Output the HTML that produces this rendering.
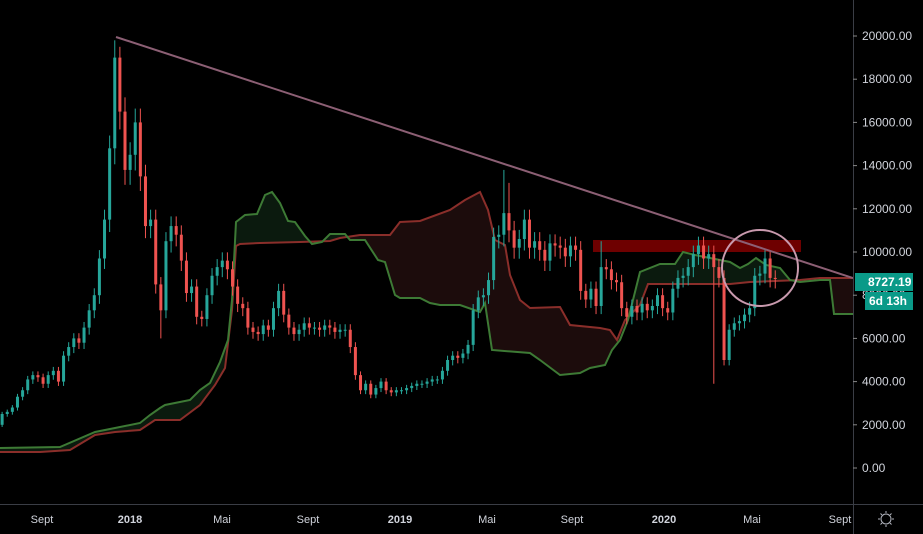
<!DOCTYPE html>
<html><head><meta charset="utf-8"><style>
html,body{margin:0;padding:0;background:#000;}
svg{display:block;font-family:"Liberation Sans",sans-serif;}
</style></head><body>
<svg id="s" width="923" height="534" viewBox="0 0 923 534" xmlns="http://www.w3.org/2000/svg">
<rect width="923" height="534" fill="#000"/>
<defs>
<clipPath id="belowA"><polygon id="pA"/></clipPath>
<clipPath id="belowB"><polygon id="pB"/></clipPath>
<clipPath id="plot"><rect x="0" y="0" width="853" height="504"/></clipPath>
</defs>
<g clip-path="url(#plot)">
<g clip-path="url(#belowA)"><polygon id="aboveB" fill="#0b1a0e"/></g>
<g clip-path="url(#belowB)"><polygon id="aboveA" fill="#1c0c0c"/></g>
<rect x="593" y="240" width="208" height="12" fill="#6e0000"/>
<polyline id="lB" fill="none" stroke="#8a2e2a" stroke-width="2"/>
<polyline id="lA" fill="none" stroke="#3d7a35" stroke-width="2"/>
<g id="candles"></g>
<line x1="116" y1="37" x2="853" y2="278" stroke="#8c5f74" stroke-width="2"/>
<circle cx="760" cy="268" r="38" fill="none" stroke="#c99aae" stroke-width="2"/>
</g>
<line x1="853.5" y1="0" x2="853.5" y2="534" stroke="#3a3d45"/>
<line x1="0" y1="504.5" x2="923" y2="504.5" stroke="#3a3d45"/>
<g id="axis" fill="#d1d4dc" font-size="12"></g>
<rect x="855" y="273" width="58" height="18" fill="#0a9a88"/>
<text x="868" y="286" fill="#fff" font-size="12" font-weight="bold">8727.19</text>
<rect x="865" y="292" width="48" height="18" fill="#0a9a88"/>
<text x="869" y="305" fill="#fff" font-size="12" font-weight="bold">6d 13h</text>
<g id="time" fill="#d1d4dc" font-size="11"></g>
<g stroke="#b2b5be" fill="none" stroke-width="1"><circle cx="886" cy="519" r="5"/>
<path d="M886 511v2M886 525v2M878 519h2M892 519h2M880.5 513.5l1.5 1.5M890 523l1.5 1.5M880.5 524.5l1.5-1.5M890 515l1.5-1.5"/></g>
</svg>
<script>
var ns="http://www.w3.org/2000/svg";
function el(t,a,p){var e=document.createElementNS(ns,t);for(var k in a)e.setAttribute(k,a[k]);(p||document.getElementById('s')).appendChild(e);return e;}
function Y(v){return 468-v*21.6;}
var A=[[0,448],[60,447],[95,432],[115,428],[140,423],[150,415],[160,408],[165,405],[190,400],[200,390],[210,383],[220,362],[228,340],[232,300],[236,222],[245,215],[257,214],[265,195],[272,192],[280,203],[288,221],[295,222],[305,236],[312,244],[322,242],[330,234],[345,234],[350,240],[365,240],[378,260],[385,262],[395,295],[400,298],[420,298],[430,303],[440,305],[460,305],[480,312],[485,303],[492,350],[530,353],[540,360],[560,375],[580,373],[590,368],[605,365],[612,350],[620,340],[628,320],[640,272],[660,264],[675,264],[683,252],[695,255],[710,258],[730,262],[740,268],[748,264],[756,258],[766,265],[780,268],[790,280],[800,282],[820,280],[830,280],[834,314],[860,314]];
var B=[[0,452],[40,452],[70,450],[95,435],[115,432],[140,430],[155,420],[180,420],[200,405],[215,385],[225,368],[232,310],[236,246],[240,244],[260,243],[300,242],[330,241],[340,238],[360,235],[390,235],[400,222],[420,221],[450,210],[465,200],[480,192],[488,210],[495,240],[505,245],[510,275],[520,300],[530,308],[560,307],[570,325],[600,328],[610,330],[617,340],[625,320],[640,305],[648,284],[700,284],[730,284],[750,282],[800,280],[820,278],[860,278]];
function ps(a){return a.map(function(p){return p.join(',')}).join(' ');}
document.getElementById('lA').setAttribute('points',ps(A));
document.getElementById('lB').setAttribute('points',ps(B));
document.getElementById('pA').setAttribute('points',ps(A)+' 860,600 0,600');
document.getElementById('pB').setAttribute('points',ps(B)+' 860,600 0,600');
document.getElementById('aboveB').setAttribute('points',ps(B)+' 860,-10 0,-10');
document.getElementById('aboveA').setAttribute('points',ps(A)+' 860,-10 0,-10');
var c=[2.0,2.5,2.6,2.8,3.3,3.6,4.1,4.3,4.2,3.9,4.3,4.5,4.0,5.2,5.6,6.0,5.8,6.5,7.3,8.0,9.7,11.5,14.8,19.0,16.5,13.8,14.5,16.0,13.5,11.2,11.5,8.5,7.3,10.5,11.2,10.8,9.6,8.1,8.4,7.0,6.9,8.0,8.9,9.3,9.6,9.2,8.4,7.6,7.4,6.5,6.3,6.2,6.6,6.4,7.4,8.2,7.1,6.5,6.2,6.4,6.7,6.5,6.5,6.4,6.6,6.5,6.3,6.4,6.4,5.6,4.3,3.6,3.9,3.4,3.7,4.0,3.6,3.5,3.6,3.6,3.7,3.8,3.9,3.9,4.0,4.1,4.1,4.5,5.0,5.2,5.1,5.3,5.7,7.3,7.9,8.0,8.7,10.7,10.8,11.8,11.0,10.2,10.6,11.5,10.2,10.5,10.1,9.6,10.4,10.3,10.2,9.8,10.3,10.1,8.2,7.8,8.3,7.5,9.3,9.2,8.7,8.6,7.4,7.0,7.5,7.2,7.6,7.3,7.5,8.0,7.4,7.2,8.3,8.8,8.9,9.3,9.9,10.3,9.7,9.9,9.3,8.8,5.0,6.4,6.7,6.8,7.1,7.4,8.9,9.0,9.7,8.8,8.75];
var g=document.getElementById('candles');
var hi={23:19.8,24:19.5,99:13.8,100:13.2,118:10.5,140:3.9,32:6.0};
for(var i=1;i<c.length;i++){var o=c[i-1],cl=c[i],x=-3+i*5.12-1.5;var up=cl>=o;var col=up?'#26a69a':'#ef5350';
var h=hi[i]&&hi[i]>Math.max(o,cl)?hi[i]:Math.max(o,cl)*1.04;var l=hi[i]&&hi[i]<Math.min(o,cl)?hi[i]:Math.min(o,cl)*0.95;
el('rect',{x:x+1,y:Y(h),width:1,height:Y(l)-Y(h),fill:col},g);
var t=Y(Math.max(o,cl)),b=Y(Math.min(o,cl));el('rect',{x:x,y:t,width:3,height:Math.max(1,b-t),fill:col},g);}
var ax=document.getElementById('axis');
for(var v=0;v<=20;v+=2){var y=Y(v);el('line',{x1:853,y1:y,x2:857,y2:y,stroke:'#888'},ax);var tx=el('text',{x:862,y:y+4},ax);tx.textContent=(v*1000).toFixed(2);}
var tl=document.getElementById('time');
[['Sept',42],['2018',130],['Mai',222],['Sept',308],['2019',400],['Mai',487],['Sept',572],['2020',664],['Mai',752],['Sept',840]].forEach(function(d){var t=el('text',{x:d[1],y:523,'text-anchor':'middle','font-weight':(d[0].match(/^20/)?'bold':'normal')},tl);t.textContent=d[0];});
</script>
</body></html>
